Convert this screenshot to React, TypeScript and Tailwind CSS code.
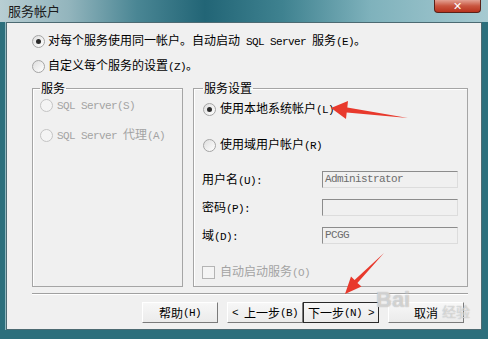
import React from 'react';

const CJK = "font-['Noto_Sans_CJK_SC',sans-serif]";

// SimSun-like mix: ascii runs are half width (mono), CJK runs full width
function T({ s }: { s: string }) {
    const parts = s.match(/[\x00-\x7f]+|[^\x00-\x7f]+/g) || [];
    return (
        <>
            {parts.map((p, i) =>
                /^[\x00-\x7f]/.test(p) ? (
                    <span key={i} className="font-['Liberation_Mono',monospace] text-[11px] tracking-[-0.6px] whitespace-pre">{p}</span>
                ) : (
                    <span key={i}>{p}</span>
                )
            )}
        </>
    );
}

function Radio({ checked, disabled }: { checked?: boolean; disabled?: boolean }) {
    return (
        <span
            className={`w-[13px] h-[13px] rounded-full border flex items-center justify-center shrink-0 ${
                disabled
                    ? 'border-[#c4c4c4] bg-[#f4f4f4]'
                    : 'border-[#a4a4a4] bg-[linear-gradient(135deg,#dedede,#ffffff)]'
            }`}
        >
            {checked && <span className="w-[5px] h-[5px] rounded-full bg-[#2a2a2a]" />}
        </span>
    );
}

function Field({ label, value }: { label: string; value: string }) {
    return (
        <div className="flex items-center h-[17px]">
            <span className="w-[120px] text-[12px] leading-[14px] text-black"><T s={label} /></span>
            <div className="w-[136px] h-[17px] bg-[#f0f0f0] border border-t-[#8c8c8c] border-l-[#8c8c8c] border-b-[#dcdcdc] border-r-[#dcdcdc] flex items-center pl-[2px]">
                <span className="font-['Liberation_Mono',monospace] text-[11px] tracking-[-0.6px] text-[#6d6d6d] leading-none">{value}</span>
            </div>
        </div>
    );
}

function Btn({ children, active }: { children: React.ReactNode; active?: boolean }) {
    return (
        <button
            className={`w-[76px] h-[21px] text-[12px] leading-[14px] text-black flex items-center justify-center bg-[linear-gradient(#f7f7f7,#ebebeb)] border ${
                active
                    ? 'border-[#2a2a2a]'
                    : 'border-t-[#ffffff] border-l-[#ffffff] border-b-[#7a7a7a] border-r-[#7a7a7a]'
            }`}
        >
            {children}
        </button>
    );
}

export default function App() {
    return (
        <div className={`w-[488px] h-[339px] relative overflow-hidden bg-[#2c6f7c] ${CJK}`}>
            {/* title bar */}
            <div className="h-[22px] flex items-start justify-between bg-[linear-gradient(90deg,#b8ced3_0%,#93b5bd_14%,#4a8694_28%,#226576_42%,#3f8290_58%,#7fb2bc_76%,#a6cad1_100%)]">
                <span className="pl-[8px] pt-[3px] text-[13px] leading-[16px] text-[#1b1b1b]">服务帐户</span>
                <div className="mr-[7px] w-[47px] h-[13px] rounded-b-[4px] border border-t-0 border-[#5a2118] bg-[linear-gradient(#e3a193,#c9553f_50%,#b8331d)] flex items-center justify-center">
                    <span className="font-['DejaVu_Sans',sans-serif] text-[11px] font-bold leading-none text-white">✕</span>
                </div>
            </div>

            {/* client area */}
            <div className="ml-[6px] mr-[6px] h-[308px] border border-[#4c6a72] shadow-[-1px_0_0_#8fb7bf] bg-[#f0f0f0] flex flex-col pl-[25px] pr-[13px]">
                <div className="mt-[11px] h-[14px] flex items-center gap-[3px] text-[12px] leading-[14px] text-black">
                    <Radio checked />
                    <span><T s="对每个服务使用同一帐户。自动启动 SQL Server 服务(E)。" /></span>
                </div>
                <div className="mt-[11px] h-[14px] flex items-center gap-[3px] text-[12px] leading-[14px] text-black">
                    <Radio />
                    <span><T s="自定义每个服务的设置(Z)。" /></span>
                </div>

                <div className="mt-[8px] flex gap-[10px]">
                    <fieldset className="w-[152px] h-[206px] border border-[#a5a5a5] shadow-[inset_1px_1px_0_#ffffff] px-[7px]">
                        <legend className="ml-[0px] px-[1px] text-[12px] leading-[14px] text-black">服务</legend>
                        <div className="mt-[3px] h-[14px] flex items-center gap-[4px] text-[12px] leading-[14px] text-[#a3a3a3]">
                            <Radio disabled />
                            <span><T s="SQL Server(S)" /></span>
                        </div>
                        <div className="mt-[16px] h-[14px] flex items-center gap-[4px] text-[12px] leading-[14px] text-[#a3a3a3]">
                            <Radio disabled />
                            <span><T s="SQL Server 代理(A)" /></span>
                        </div>
                    </fieldset>

                    <fieldset className="w-[275px] h-[206px] border border-[#a5a5a5] shadow-[inset_1px_1px_0_#ffffff] pl-[8px] pr-[9px]">
                        <legend className="ml-[1px] px-[1px] text-[12px] leading-[14px] text-black">服务设置</legend>
                        <div className="mt-[7px] ml-[1px] h-[14px] flex items-center gap-[4px] text-[12px] leading-[14px] text-black">
                            <Radio checked />
                            <span><T s="使用本地系统帐户(L)" /></span>
                        </div>
                        <div className="mt-[22px] ml-[1px] h-[14px] flex items-center gap-[4px] text-[12px] leading-[14px] text-black">
                            <Radio />
                            <span><T s="使用域用户帐户(R)" /></span>
                        </div>
                        <div className="mt-[19px] flex flex-col gap-[11px]">
                            <Field label="用户名(U):" value="Administrator" />
                            <Field label="密码(P):" value="" />
                            <Field label="域(D):" value="PCGG" />
                        </div>
                        <div className="mt-[21px] h-[14px] flex items-center gap-[5px] text-[12px] leading-[14px] text-[#a3a3a3]">
                            <span className="w-[13px] h-[13px] border border-[#b4b4b4] bg-[#f4f4f4] shrink-0" />
                            <span><T s="自动启动服务(O)" /></span>
                        </div>
                    </fieldset>
                </div>

                <div className="mt-[6px] w-[436px] h-[2px] border-t border-[#a0a0a0] border-b border-b-[#ffffff]" />

                <div className="mt-[7px] flex pl-[110px]">
                    <Btn><T s="帮助(H)" /></Btn>
                    <div className="w-[9px]" />
                    <Btn><T s="< 上一步(B)" /></Btn>
                    <Btn active><T s="下一步(N) >" /></Btn>
                    <div className="w-[9px]" />
                    <Btn><T s="取消" /></Btn>
                </div>
            </div>

            {/* watermark */}
            <div className="absolute left-[376px] top-[289px] text-[22px] font-bold leading-none text-white/50 [text-shadow:0_0_1px_#a0a0a0] font-['Liberation_Sans',sans-serif]">Bai</div>
            <div className="absolute left-[442px] top-[304px] text-[14px] leading-none text-white/50 [text-shadow:0_0_1px_#a0a0a0]">经验</div>

            {/* red arrows */}
            <svg className="absolute left-0 top-0 pointer-events-none" width="488" height="339" viewBox="0 0 488 339">
                <polygon points="331,108 348,101 347.3,107.5 408,118 346.7,112.5 346,119" fill="#e8392c" />
                <polygon points="345,294 351,276.5 354.6,280.1 384,253 357.4,282.9 361.5,286.5" fill="#e8392c" />
            </svg>
        </div>
    );
}
